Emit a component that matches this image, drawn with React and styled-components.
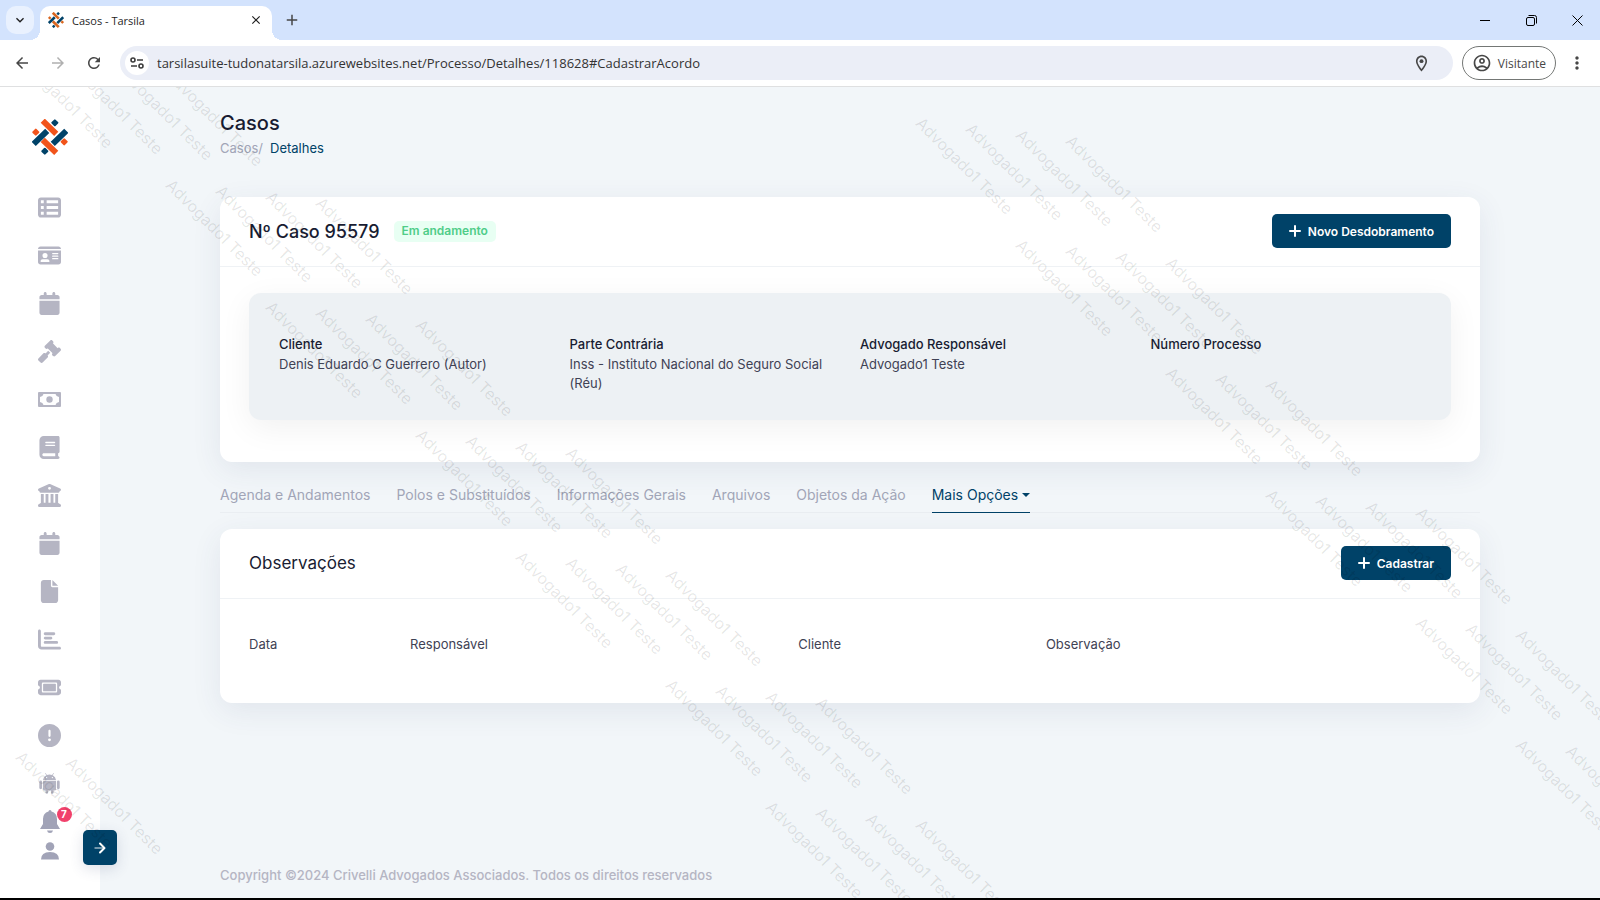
import React from "react";
import styled, { createGlobalStyle } from "styled-components";
import {
  FaTableList, FaIdCard, FaCalendar, FaGavel, FaBook, FaBuildingColumns,
  FaFile, FaChartBar, FaTicket, FaCircleExclamation,
} from "react-icons/fa6";
import {
  MdArrowBack, MdArrowForward, MdRefresh, MdAdd, MdClose, MdMoreVert,
  MdOutlineAccountCircle, MdOutlineLocationOn, MdKeyboardArrowDown,
} from "react-icons/md";

const Global = createGlobalStyle`
  * { box-sizing: border-box; }
  html, body, #root { height: 100%; }
  body { margin: 0; font-family: Inter, sans-serif; font-size: 13px; color: #181c32; background: #f2f6f9; }
  button { font: inherit; border: 0; padding: 0; background: none; cursor: pointer; }
  a { color: inherit; text-decoration: none; }
  h1, h2, p, dl, dt, dd, ul { margin: 0; padding: 0; font-weight: inherit; }
`;

const Window = styled.div`
  min-height: 100%;
  display: flex;
  flex-direction: column;
  border-bottom: 2px solid #000;
`;

const TabStrip = styled.div`
  height: 40px;
  display: flex;
  background: #d3e3fd;
  padding-left: 6px;
`;

const TabSearch = styled.button`
  width: 28px;
  height: 28px;
  margin: 6px 6px 0 0;
  border-radius: 10px;
  background: #e9f1fe;
  color: #1f1f1f;
  display: grid;
  place-items: center;
`;

const BrowserTab = styled.div`
  position: relative;
  width: 232px;
  height: 34px;
  margin-top: 6px;
  padding: 0 9px 6px 8px;
  border-radius: 10px 10px 0 0;
  background: #fff;
  display: flex;
  align-items: center;
  gap: 8px;
  font: 11px "Open Sans", sans-serif;
  color: #1f1f1f;
  &::before, &::after {
    content: "";
    position: absolute;
    bottom: 0;
    width: 10px;
    height: 10px;
  }
  &::before { right: 100%; background: radial-gradient(circle at 0 0, transparent 10px, #fff 10px); }
  &::after { left: 100%; background: radial-gradient(circle at 100% 0, transparent 10px, #fff 10px); }
`;

const TabTitle = styled.span`
  flex: 1;
`;

const IconButton = styled.button`
  display: grid;
  place-items: center;
  width: ${(p) => p.$w || 36}px;
  height: ${(p) => p.$h || 36}px;
  color: ${(p) => p.$color || "#474747"};
`;

const WindowControls = styled.div`
  margin-left: auto;
  display: flex;
`;

const Toolbar = styled.div`
  height: 47px;
  display: flex;
  align-items: center;
  background: #fff;
  border-bottom: 1px solid #dfe0e1;
  padding: 0 2px 0 4px;
  position: relative;
  z-index: 3;
`;

const Address = styled.label`
  flex: 1;
  height: 34px;
  margin: 0 9px 0 8px;
  padding: 0 22px 0 5px;
  border-radius: 17px;
  background: #ebeef7;
  display: flex;
  align-items: center;
  gap: 8px;
  color: #474747;
`;

const SiteInfo = styled.span`
  width: 24px;
  height: 24px;
  border-radius: 50%;
  background: #fff;
  display: grid;
  place-items: center;
`;

const UrlInput = styled.input`
  flex: 1;
  border: 0;
  padding: 0;
  background: none;
  outline: none;
  font: 13px "Open Sans", sans-serif;
  color: #333;
`;

const Profile = styled.button`
  && {
    height: 34px;
    width: 94px;
    border: 1px solid #747775;
    font: 12px "Open Sans", sans-serif;
  }
  border-radius: 17px;
  display: flex;
  align-items: center;
  justify-content: center;
  gap: 6px;
  color: #474747;
`;

const Page = styled.div`
  flex: 1;
  display: flex;
  position: relative;
  overflow: hidden;
`;

const Sidebar = styled.aside`
  width: 100px;
  background: #fff;
  display: flex;
  flex-direction: column;
  align-items: center;
  position: relative;
  padding: 32px 1px 0 0;
`;

const Nav = styled.nav`
  margin-top: 25px;
  display: flex;
  flex-direction: column;
`;

const NavLink = styled.a`
  height: 48px;
  width: 48px;
  display: grid;
  place-items: center;
  color: #b5b5c3;
  svg { height: 23px; width: auto; }
`;

const UserTools = styled.div`
  margin-top: 3px;
  display: flex;
  flex-direction: column;
  align-items: center;
  gap: 9px;
`;

const ToolButton = styled.button`
  position: relative;
  display: grid;
  color: #a1a3b7;
`;

const Count = styled.span`
  position: absolute;
  left: 17px;
  top: -3px;
  width: 15px;
  height: 15px;
  border-radius: 50%;
  background: #f1416c;
  color: #fff;
  font-size: 10px;
  line-height: 15px;
  font-weight: 700;
`;

const Toggle = styled.button`
  position: absolute;
  right: -17px;
  bottom: 33px;
  width: 34px;
  height: 35px;
  border-radius: 5px;
  background: #004268;
  box-shadow: 0 4px 14px rgba(56, 71, 109, 0.16);
  display: grid;
  place-items: center;
  z-index: 1;
`;

const Main = styled.main`
  flex: 1;
  padding: 24px 120px 14px;
  display: flex;
  flex-direction: column;
`;

const PageTitle = styled.h1`
  font-size: 20px;
  line-height: 24px;
  font-weight: 500;
`;

const Breadcrumb = styled.nav`
  margin-top: 4px;
  line-height: 18px;
  color: #a1a5b7;
  display: flex;
  gap: 7px;
  b { font-weight: 400; color: #004268; }
`;

const Card = styled.section`
  border-radius: 12px;
  background: #fff;
  box-shadow: 0 8px 30px rgba(56, 71, 109, 0.09);
`;

const CaseCard = styled(Card)`
  margin-top: 40px;
  padding-bottom: 42px;
`;

const CardHeader = styled.header`
  height: 70px;
  padding: 0 29px 1px;
  border-bottom: 1px solid #eff2f5;
  display: flex;
  align-items: center;
  gap: 14px;
`;

const CardTitle = styled.h2`
  font-size: ${(p) => (p.$strong ? 18 : 17)}px;
  font-weight: ${(p) => (p.$strong ? 500 : 400)};
`;

const Status = styled.span`
  height: 21px;
  padding: 0 8px;
  border-radius: 5px;
  background: #e8fff3;
  color: #50cd89;
  font-size: 12px;
  font-weight: 600;
  line-height: 20px;
`;

const Primary = styled.button`
  && {
    font-size: 12px;
    font-weight: 600;
    padding: 0 17px;
  }
  margin-left: auto;
  height: 34px;
  border-radius: 5px;
  background: #004268;
  color: #fff;
  display: flex;
  align-items: center;
  gap: 7px;
`;

const Parties = styled.dl`
  && { padding: 42px 30px 27px; margin: 26px 29px 0; }
  border-radius: 12px;
  background: #edf1f4;
  box-shadow: 0 8px 32px rgba(0, 0, 0, 0.06);
  display: grid;
  grid-template-columns: repeat(4, 1fr);
  gap: 20px;
  line-height: 19px;
  && dt { font-weight: 500; margin-bottom: 1px; }
  dd { color: #3f4254; }
`;

const Tabs = styled.nav`
  margin-top: 16px;
  height: 35px;
  border-bottom: 1px solid #eaeef2;
  display: flex;
  gap: 26px;
  font-size: 14px;
`;

const Tab = styled.a`
  height: 35px;
  line-height: 34px;
  color: ${(p) => (p.$active ? "#004268" : "#a1a5b7")};
  border-bottom: 1px solid ${(p) => (p.$active ? "#004268" : "transparent")};
  display: flex;
  align-items: center;
  gap: 4px;
`;

const Caret = styled.span`
  border: 4px solid transparent;
  border-top-color: currentColor;
  border-bottom: 0;
`;

const NotesCard = styled(Card)`
  margin-top: 16px;
  padding-bottom: 44px;
`;

const Table = styled.table`
  margin: 30px 29px 0;
  width: calc(100% - 58px);
  table-layout: fixed;
  border-collapse: collapse;
  th { padding: 4px 0; height: 30px; text-align: left; font-weight: 400; color: #3f4254; }
`;

const Footer = styled.footer`
  margin-top: auto;
  line-height: 18px;
  font-weight: 500;
  color: #b5b5c3;
`;

const Watermarks = styled.div`
  position: absolute;
  inset: 0;
  overflow: hidden;
  pointer-events: none;
  z-index: 2;
`;

const Mark = styled.span`
  position: absolute;
  white-space: nowrap;
  font-size: 16px;
  line-height: 20px;
  color: rgba(0, 0, 0, 0.1);
  transform-origin: 0 50%;
  transform: rotate(45deg);
`;

const Dot = ({ x, y }) => (
  <rect x={x - 8} y={y - 8} width="16" height="16" rx="3" transform={`rotate(45 ${x} ${y})`} />
);

function Logo({ size, orange = "#f1541b", blue = "#004268" }) {
  return (
    <svg width={size} height={size} viewBox="0 0 104 104" strokeWidth="17">
      <g stroke={orange}><path d="M31 5L70 43M31 60L70 98" /></g>
      <g stroke={blue}><path d="M5 72L44 34M60 72L99 34" /></g>
      <g fill={orange}><Dot x={11} y={38} /><Dot x={93} y={66} /></g>
      <g fill={blue}><Dot x={66} y={11} /><Dot x={37} y={93} /></g>
    </svg>
  );
}

const MoneyIcon = () => (
  <svg viewBox="0 0 23 23" fill="currentColor">
    <path fillRule="evenodd" d="M1 4H22Q23 4 23 5V18Q23 19 22 19H1Q0 19 0 18V5Q0 4 1 4ZM5.500 6Q5 8.500 2 9V14Q5 14.500 5.500 17H17.500Q18 14.500 21 14V9Q18 8.500 17.500 6Z" />
    <circle cx="11.500" cy="11.500" r="3.200" />
  </svg>
);

const AndroidIcon = () => (
  <svg viewBox="0 0 21 23" fill="currentColor">
    <path fillRule="evenodd" d="M4 8Q4.300 4.600 7.300 3.200L6 1.300L6.500 1L7.900 2.900Q10.500 2 13.100 2.900L14.500 1L15 1.300L13.700 3.200Q16.700 4.600 17 8ZM7.600 4.900A0.700 0.700 0 1 0 7.600 6.300A0.700 0.700 0 1 0 7.600 4.900ZM13.400 4.900A0.700 0.700 0 1 0 13.400 6.300A0.700 0.700 0 1 0 13.400 4.900Z" />
    <path d="M4 8.800H17V17Q17 18.500 15.500 18.500H14.500V20.500Q14.500 21.800 13.200 21.800Q11.900 21.800 11.900 20.500V18.500H9.100V20.500Q9.100 21.800 7.800 21.800Q6.500 21.800 6.500 20.500V18.500H5.500Q4 18.500 4 17Z" />
    <rect x="0.300" y="8.600" width="2.800" height="8.600" rx="1.400" />
    <rect x="17.900" y="8.600" width="2.800" height="8.600" rx="1.400" />
  </svg>
);

const NAV = [
  ["Painel", FaTableList], ["Clientes", FaIdCard], ["Agenda", FaCalendar], ["Processos", FaGavel],
  ["Financeiro", MoneyIcon], ["Livros", FaBook], ["Tribunais", FaBuildingColumns], ["Prazos", FaCalendar],
  ["Documentos", FaFile], ["Relatórios", FaChartBar], ["Tickets", FaTicket],
  ["Avisos", FaCircleExclamation], ["Aplicativo", AndroidIcon],
];

const PARTIES = [
  ["Cliente", "Denis Eduardo C Guerrero (Autor)"],
  ["Parte Contrária", "Inss - Instituto Nacional do Seguro Social (Réu)"],
  ["Advogado Responsável", "Advogado1 Teste"],
  ["Número Processo", ""],
];

const TABS = ["Agenda e Andamentos", "Polos e Substituídos", "Informações Gerais", "Arquivos", "Objetos da Ação"];

const COLUMNS = [["Data", "13.4%"], ["Responsável", "32.3%"], ["Cliente", "20.6%"], ["Observação", "33.7%"]];

// Start of each run of marks, and how many marks the run has
const MARK_RUNS = [
  [19, -43, 4], [169, 85, 4], [269, 207, 4], [419, 335, 4], [519, 457, 4], [669, 585, 4], [769, 707, 4],
  [919, 23, 4], [1019, 145, 4], [1169, 273, 3], [1269, 395, 4], [1419, 523, 3], [1519, 645, 2],
  [19, 657, 2],
];

const MARKS = MARK_RUNS.flatMap(([x, y, n]) =>
  Array.from({ length: n }, (_, i) => ({ left: x + i * 50, top: y + i * 6 }))
);

const Plus = () => (
  <svg width="12" height="12" viewBox="0 0 12 12" stroke="#fff" strokeWidth="2">
    <path d="M6 1V11M1 6H11" strokeLinecap="round" />
  </svg>
);

export default function App() {
  return (
    <>
      <Global />
      <Window>
        <TabStrip>
          <TabSearch aria-label="Pesquisar guias"><MdKeyboardArrowDown size={16} /></TabSearch>
          <BrowserTab>
            <Logo size={16} orange="#d9661f" />
            <TabTitle>Casos - Tarsila</TabTitle>
            <IconButton $w={14} $h={14} $color="#1f1f1f" aria-label="Fechar guia"><MdClose size={14} /></IconButton>
          </BrowserTab>
          <IconButton $w={40} $h={40} aria-label="Nova guia"><MdAdd size={18} /></IconButton>
          <WindowControls>
            <IconButton $w={46} $h={40} aria-label="Minimizar">
              <svg width="10" height="10" stroke="#000"><path d="M0 5.500H10" /></svg>
            </IconButton>
            <IconButton $w={46} $h={40} aria-label="Restaurar">
              <svg width="11" height="11" fill="none" stroke="#000">
                <rect x="0.500" y="2.500" width="8" height="8" rx="1.500" />
                <path d="M2.500 0.500H8.500Q10.500 0.500 10.500 2.500V8.500" />
              </svg>
            </IconButton>
            <IconButton $w={46} $h={40} aria-label="Fechar">
              <svg width="11" height="11" stroke="#000"><path d="M0.500 0.500L10.500 10.500M10.500 0.500L0.500 10.500" /></svg>
            </IconButton>
          </WindowControls>
        </TabStrip>
        <Toolbar>
          <IconButton aria-label="Voltar"><MdArrowBack size={18} /></IconButton>
          <IconButton aria-label="Avançar" $color="#b0b0b0"><MdArrowForward size={18} /></IconButton>
          <IconButton aria-label="Recarregar"><MdRefresh size={18} /></IconButton>
          <Address>
            <SiteInfo>
              <svg width="14" height="12" fill="none" stroke="#3c3c3c" strokeWidth="1.600">
                <circle cx="3" cy="3" r="2" /><path d="M7 3H13M1 9H7" /><circle cx="11" cy="9" r="2" />
              </svg>
            </SiteInfo>
            <UrlInput
              aria-label="Endereço"
              defaultValue="tarsilasuite-tudonatarsila.azurewebsites.net/Processo/Detalhes/118628#CadastrarAcordo"
            />
            <MdOutlineLocationOn size={19} />
          </Address>
          <Profile><MdOutlineAccountCircle size={20} />Visitante</Profile>
          <IconButton $w={42} aria-label="Menu"><MdMoreVert size={20} /></IconButton>
        </Toolbar>
        <Page>
          <Sidebar>
            <a href="#inicio" aria-label="Tarsila"><Logo size={36} /></a>
            <Nav>
              {NAV.map(([label, Icon]) => (
                <NavLink key={label} href={"#" + label} aria-label={label}><Icon /></NavLink>
              ))}
            </Nav>
            <UserTools>
              <ToolButton aria-label="Notificações">
                <svg width="20" height="23" viewBox="0 0 20 23" fill="currentColor">
                  <path d="M10 0Q11.500 0 11.500 1.500Q17 3 17 9V14L20 19H0L3 14V9Q3 3 8.500 1.500Q8.500 0 10 0ZM7 20.500H13Q12.500 23 10 23Q7.500 23 7 20.500Z" />
                </svg>
                <Count>7</Count>
              </ToolButton>
              <ToolButton aria-label="Perfil">
                <svg width="18" height="18" viewBox="0 0 18 18" fill="currentColor">
                  <circle cx="9" cy="4.500" r="4.300" /><path d="M0 17.500Q0 10 9 10Q18 10 18 17.500Z" />
                </svg>
              </ToolButton>
            </UserTools>
            <Toggle aria-label="Expandir menu">
              <svg width="12" height="12" fill="none" stroke="#fff" strokeLinecap="round" strokeLinejoin="round">
                <path d="M1 6H10" strokeOpacity="0.600" strokeWidth="1.400" /><path d="M6 1.500L10.500 6L6 10.500" strokeWidth="2" />
              </svg>
            </Toggle>
          </Sidebar>
          <Main>
            <PageTitle>Casos</PageTitle>
            <Breadcrumb><a href="#casos">Casos/</a><b>Detalhes</b></Breadcrumb>
            <CaseCard>
              <CardHeader>
                <CardTitle $strong>Nº Caso 95579</CardTitle>
                <Status>Em andamento</Status>
                <Primary><Plus />Novo Desdobramento</Primary>
              </CardHeader>
              <Parties>
                {PARTIES.map(([k, v]) => <div key={k}><dt>{k}</dt><dd>{v}</dd></div>)}
              </Parties>
            </CaseCard>
            <Tabs>
              {TABS.map((t) => <Tab key={t} href="#aba">{t}</Tab>)}
              <Tab $active href="#mais">Mais Opções<Caret /></Tab>
            </Tabs>
            <NotesCard>
              <CardHeader>
                <CardTitle>Observações</CardTitle>
                <Primary><Plus />Cadastrar</Primary>
              </CardHeader>
              <Table>
                <colgroup>{COLUMNS.map(([c, w]) => <col key={c} width={w} />)}</colgroup>
                <thead><tr>{COLUMNS.map(([c]) => <th key={c} scope="col">{c}</th>)}</tr></thead>
              </Table>
            </NotesCard>
            <Footer>Copyright ©2024 Crivelli Advogados Associados. Todos os direitos reservados</Footer>
          </Main>
          <Watermarks aria-hidden="true">
            {MARKS.map((m) => <Mark key={m.left + "-" + m.top} style={m}>Advogado1 Teste</Mark>)}
          </Watermarks>
        </Page>
      </Window>
    </>
  );
}
